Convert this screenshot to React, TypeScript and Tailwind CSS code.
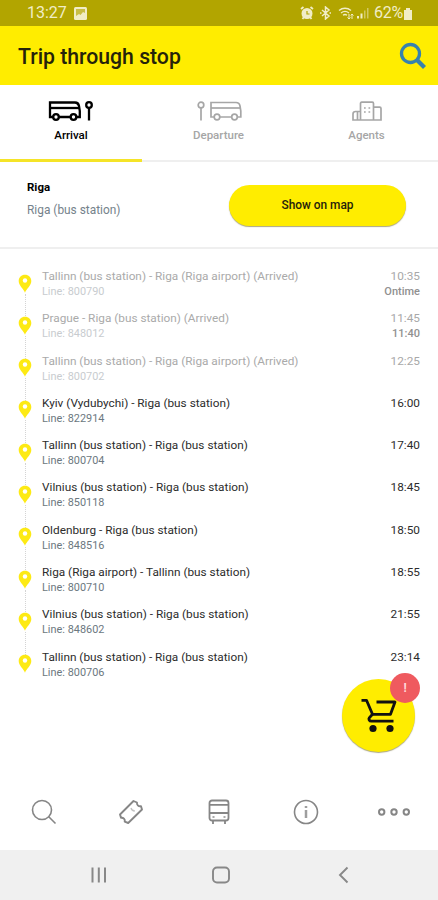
import React, { useState } from "react";

type Trip = {
  title: string;
  line: string;
  time: string;
  note?: string;
  arrived?: boolean;
};

const trips: Trip[] = [
  { title: "Tallinn (bus station) - Riga (Riga airport) (Arrived)", line: "800790", time: "10:35", note: "Ontime", arrived: true },
  { title: "Prague - Riga (bus station) (Arrived)", line: "848012", time: "11:45", note: "11:40", arrived: true },
  { title: "Tallinn (bus station) - Riga (Riga airport) (Arrived)", line: "800702", time: "12:25", arrived: true },
  { title: "Kyiv (Vydubychi) - Riga (bus station)", line: "822914", time: "16:00" },
  { title: "Tallinn (bus station) - Riga (bus station)", line: "800704", time: "17:40" },
  { title: "Vilnius (bus station) - Riga (bus station)", line: "850118", time: "18:45" },
  { title: "Oldenburg - Riga (bus station)", line: "848516", time: "18:50" },
  { title: "Riga (Riga airport) - Tallinn (bus station)", line: "800710", time: "18:55" },
  { title: "Vilnius (bus station) - Riga (bus station)", line: "848602", time: "21:55" },
  { title: "Tallinn (bus station) - Riga (bus station)", line: "800706", time: "23:14" },
];

function BusIcon({ flip }: { flip?: boolean }) {
  return (
    <svg
      width="46"
      height="22"
      viewBox="0 0 46 22"
      fill="none"
      stroke="currentColor"
      strokeWidth={flip ? 1.7 : 2.3}
    >
      <g transform={flip ? "translate(13 0)" : undefined}>
        <path d="M5 17H2V2.500h25c2.500 0 3.600 1.300 4 3.500l.8 5v6h-3M11 17h11" />
        <path d="M2 8h29" />
        <circle cx="8" cy="17" r="2.800" />
        <circle cx="25.500" cy="17" r="2.800" />
      </g>
      <g transform={flip ? "translate(-36 0)" : undefined}>
        <circle cx="41" cy="5" r="2.800" />
        <path d="M41 8v12.500" />
      </g>
    </svg>
  );
}

function AgentsIcon() {
  return (
    <svg width="32" height="22" viewBox="0 0 32 22" fill="none" stroke="currentColor" strokeWidth="1.700">
      <path d="M9.500 20V3.500c0-.8.400-1.300 1.200-1.300h10.600c.8 0 1.200.5 1.200 1.300V20" />
      <path d="M9.500 11.500h-5c-1.600 0-2.500 1-2.500 2.500v6h28V8.500c0-.9-.4-1.300-1.300-1.300h-6.200M6.500 12v8" />
      <path d="M13 8h1.700M17.500 8h1.700M13 12h1.700M17.500 12h1.700" />
    </svg>
  );
}

function PinIcon() {
  return (
    <svg width="14" height="20" viewBox="0 0 14 20">
      <path
        d="M7 .8C3.400.8.700 3.500.700 7c0 4.500 5 8 6.300 11.700C8.300 15 13.300 11.500 13.300 7 13.300 3.500 10.600.8 7 .8Z"
        fill="#fdea14"
      />
      <circle cx="7" cy="6.500" r="2.200" fill="#fff" />
    </svg>
  );
}

function StatusBar() {
  return (
    <div className="flex h-[26px] items-center justify-between bg-[#b2a500] pr-[25px] pl-[27px] text-[#f1edc6]">
      <div className="flex items-center gap-[7px]">
        <span className="text-[16px] leading-[26px]">13:27</span>
        <svg width="13" height="13" viewBox="0 0 13 13">
          <rect width="13" height="13" rx="1.500" fill="currentColor" />
          <path d="M2 9V2h9v4L9 5 6.500 8 5 7Z" fill="#b2a500" opacity=".65" />
        </svg>
      </div>
      <div className="flex items-center">
        <svg width="14" height="14" viewBox="0 0 14 14" fill="none" stroke="currentColor" strokeWidth="1.800">
          <circle cx="7" cy="7.500" r="4.600" fill="currentColor" />
          <path d="M1 3l2.500-2M13 3l-2.500-2M2.500 13l1.500-2M11.500 13 10 11" />
          <path d="M7 5v3h2.500" stroke="#b2a500" strokeWidth="1.200" />
        </svg>
        <svg className="ml-[5px]" width="13" height="14" viewBox="0 0 13 14" fill="none" stroke="currentColor" strokeWidth="1.500">
          <path d="M3 4l7 6-3.500 3V1L10 4l-7 6M1 7h1.500M10.500 7H12" />
        </svg>
        <svg className="ml-[6px]" width="16" height="14" viewBox="0 0 16 14" fill="none" stroke="currentColor" strokeWidth="1.300">
          <path d="M1 4.500c3.500-3 8.500-3 12 0M3 7c2.500-2 5.500-2 8 0M5 9.300c1.300-1 2.700-1 4 0" />
          <path d="M11 8v5M9.500 11.500 11 13l1.500-1.500M14 13V8M12.700 9.500 14 8l1.500 1.500" strokeWidth="1" />
        </svg>
        <svg className="ml-[3px]" width="13" height="12" viewBox="0 0 13 12" fill="currentColor">
          <rect x="0" y="9" width="2" height="2.500" />
          <rect x="3.500" y="6.500" width="2" height="5" />
          <rect x="7" y="3.500" width="1.500" height="8" opacity=".5" />
          <rect x="10" y="1" width="1.500" height="10.500" opacity=".5" />
        </svg>
        <span className="ml-[4px] text-[16px] leading-[26px] tracking-[-0.2px]">62%</span>
        <svg width="10" height="13" viewBox="0 0 10 13">
          <path d="M3 1h4v2h2v10H1V3h2Z" fill="currentColor" />
        </svg>
      </div>
    </div>
  );
}

const tabs = [
  { id: "arrival", label: "Arrival", icon: <BusIcon /> },
  { id: "departure", label: "Departure", icon: <BusIcon flip /> },
  { id: "agents", label: "Agents", icon: <AgentsIcon /> },
];

function TripRow({ trip, last }: { trip: Trip; last: boolean }) {
  return (
    <div className="flex h-[42.3px]">
      <div className="flex w-[14px] flex-col items-center pt-[5.500px]">
        <PinIcon />
        {!last && <div className="-mb-[6px] w-px flex-1 border-l border-dotted border-[#d4d4d4]"></div>}
      </div>
      <div className={trip.arrived ? "ml-[10px] flex-1 text-[#aaa]" : "ml-[10px] flex-1 text-[#2c2c2c]"}>
        <div className="text-[11.8px] leading-[16px] whitespace-nowrap">{trip.title}</div>
        <div className={trip.arrived ? "text-[10.9px] leading-[16px] text-[#c8cccf]" : "text-[10.9px] leading-[16px] text-[#6c7880]"}>
          Line: {trip.line}
        </div>
      </div>
      <div className={trip.arrived ? "text-right text-[#a8a8a8]" : "text-right text-[#2c2c2c]"}>
        <div className="text-[11.8px] leading-[16px]">{trip.time}</div>
        {trip.note && <div className="text-[11px] leading-[16px] font-medium text-[#909090]">{trip.note}</div>}
      </div>
    </div>
  );
}

export default function App() {
  const [tab, setTab] = useState("arrival");

  return (
    <div className="relative flex h-[900px] w-[438px] flex-col overflow-hidden bg-white font-['Roboto',sans-serif] text-black">
      <StatusBar />

      {/* Header */}
      <div className="flex h-[59px] items-center justify-between bg-[#ffed00] pr-[11px] pl-[18px]">
        <h1 className="pt-[2px] text-[21.2px] font-medium text-[#25230a]">Trip through stop</h1>
        <svg width="28" height="28" viewBox="0 0 28 28" fill="none" stroke="#3782ae" strokeWidth="3.300">
          <circle cx="11.500" cy="11.500" r="9" />
          <path d="m18 18 7.500 7.500" strokeWidth="4.200" />
        </svg>
      </div>

      {/* Tabs */}
      <div className="grid h-[77px] shrink-0 grid-cols-[142px_153px_143px] border-b-2 border-[#efefef]">
        {tabs.map((t) => (
          <button
            key={t.id}
            onClick={() => setTab(t.id)}
            className={
              tab === t.id
                ? "-mb-[2px] flex flex-col items-center border-b-3 border-[#f5e428] pt-[15px] text-black"
                : "-mb-[2px] flex flex-col items-center pt-[15px] text-[#a6a6a6]"
            }
          >
            {t.icon}
            <span className="mt-[5px] text-[11.5px] leading-[16px] font-medium">{t.label}</span>
          </button>
        ))}
      </div>

      {/* Stop */}
      <div className="flex h-[87px] shrink-0 justify-between border-b-2 border-[#efefef] pt-[16px] pr-[32px] pl-[27px]">
        <div>
          <div className="text-[11.5px] leading-[18px] font-bold">Riga</div>
          <div className="mt-[5px] text-[11.9px] leading-[18px] text-[#75828b]">Riga (bus station)</div>
        </div>
        <button className="mt-[7px] h-[41px] w-[177px] rounded-full bg-[#ffed00] text-[11.9px] font-medium text-[#25230a] shadow-[0_1px_1px_rgba(90,80,0,0.5)]">
          Show on map
        </button>
      </div>

      {/* Trips */}
      <div className="flex-1 pt-[19px] pr-[18px] pl-[18px]">
        {trips.map((trip, i) => (
          <TripRow key={i} trip={trip} last={i === trips.length - 1} />
        ))}
      </div>

      {/* Cart */}
      <button className="absolute top-[679px] left-[342px] flex size-[73px] items-center justify-center rounded-full bg-[#ffed00] shadow-[0_1px_1px_rgba(90,80,0,0.5)]">
        <svg width="38" height="38" viewBox="0 0 38 38" fill="none" stroke="#111" strokeWidth="2.800">
          <path d="M1.500 3.300h5l6 14h18l4.500-12.300H16.500" strokeLinejoin="round" />
          <path d="M12.500 17.300l-3.200 3.500c-1 1.500 0 3.400 2 3.400h22.200" />
          <circle cx="13" cy="31.500" r="3.600" fill="#111" stroke="none" />
          <circle cx="30" cy="31.500" r="3.600" fill="#111" stroke="none" />
        </svg>
        <span className="absolute top-[-6px] left-[48px] flex size-[30px] items-center justify-center rounded-full bg-[#ef5a5f] text-[12px] font-bold text-[#ffd9da]">
          !
        </span>
      </button>

      {/* Bottom menu */}
      <div className="grid h-[77px] shrink-0 grid-cols-5 items-center justify-items-center text-[#868686]">
        <svg width="26" height="26" viewBox="0 0 26 26" fill="none" stroke="currentColor" strokeWidth="1.600">
          <circle cx="11" cy="11" r="9.500" />
          <path d="m17.500 17.500 7 7" />
        </svg>
        <svg width="26" height="26" viewBox="0 0 26 26" fill="none" stroke="currentColor" strokeWidth="1.900" strokeLinejoin="round">
          <path d="M15.500 2 2 15.500l1 3.300c2.200-.6 4.400 1.600 3.700 3.800l3.500 1.400L24 10.500l-1-3.300c-2.500.6-4.600-1.500-4-3.700Z" />
          <path d="M13 9c.5 1.800 1.800 2.800 3.800 3" strokeWidth="1.300" opacity=".5" />
        </svg>
        <svg width="24" height="26" viewBox="0 0 24 26" fill="none" stroke="currentColor" strokeWidth="1.800">
          <rect x="2.500" y="1.500" width="19" height="20" rx="2.500" />
          <path d="M2.500 5.800h19M2.500 14h19M6 21.500V25M18 21.500V25" />
          <path d="M5.500 18h2M16.500 18h2" opacity=".7" />
        </svg>
        <svg className="-ml-[1px]" width="26" height="26" viewBox="0 0 26 26" fill="none" stroke="currentColor" strokeWidth="1.600">
          <circle cx="13" cy="13" r="11.500" />
          <path d="M13 11v8M13 7v2" strokeWidth="2.500" opacity=".8" />
        </svg>
        <svg width="34" height="10" viewBox="0 0 34 10" fill="none" stroke="currentColor" strokeWidth="2">
          <circle cx="4.700" cy="5" r="2.700" />
          <circle cx="17" cy="5" r="2.700" />
          <circle cx="29.300" cy="5" r="2.700" />
        </svg>
      </div>

      {/* System navigation */}
      <div className="flex h-[50px] shrink-0 items-center bg-[#f0f0f0] pl-[90px] text-[#888]">
        <svg width="17" height="18" viewBox="0 0 17 18" stroke="currentColor" strokeWidth="2">
          <path d="M2.500 1.500v15M8.800 1.500v15M15 1.500v15" />
        </svg>
        <svg className="ml-[104px]" width="20" height="18" viewBox="0 0 20 18" fill="none" stroke="currentColor" strokeWidth="1.900">
          <rect x="2" y="1.500" width="16" height="15" rx="4" />
        </svg>
        <svg className="ml-[107px]" width="11" height="18" viewBox="0 0 11 18" fill="none" stroke="currentColor" strokeWidth="1.900">
          <path d="M9.500 1.500 2 9l7.500 7.500" />
        </svg>
      </div>
    </div>
  );
}
